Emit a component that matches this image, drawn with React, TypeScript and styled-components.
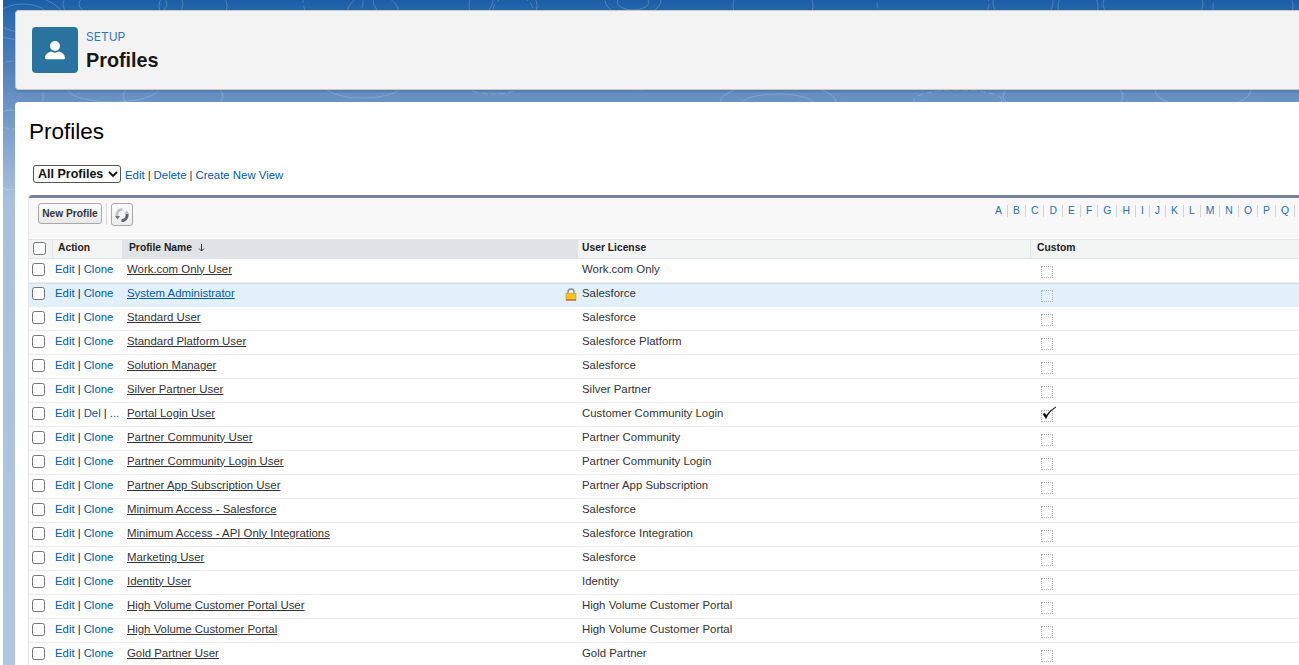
import React from "react";
import styled, { createGlobalStyle } from "styled-components";

const Global = createGlobalStyle`
  html, body { margin: 0; padding: 0; height: 665px; overflow: hidden; background: #fff; }
  body { font-family: "Liberation Sans", Arial, sans-serif; color: #181818; }
`;

const Backdrop = styled.div`
  position: relative;
  height: 665px;
  margin-left: 3px;
  padding: 10px 0 0 12px;
  box-sizing: border-box;
  overflow: hidden;
  background: linear-gradient(180deg, #1b5ea6 0px, #2a6aad 14px, #6490c2 95px, #a9c0de 200px, #b0c6e2 665px);
`;

const Contours = styled.svg`
  position: absolute;
  left: 0;
  top: 0;
  width: 1296px;
  height: 190px;
  pointer-events: none;
`;

const HeaderCard = styled.header`
  position: relative;
  display: flex;
  align-items: center;
  gap: 8px;
  height: 80px;
  box-sizing: border-box;
  padding: 0 0 0 16px;
  background: #f3f3f3;
  border: 1px solid #c9c9c9;
  border-right: 0;
  border-radius: 4px 0 0 4px;
  box-shadow: 0 2px 2px rgba(0, 0, 0, 0.12);
`;

const IconTile = styled.div`
  display: flex;
  align-items: center;
  justify-content: center;
  width: 46px;
  height: 46px;
  border-radius: 4px;
  background: #2a739e;
`;

const HeaderText = styled.div`
  display: flex;
  flex-direction: column;
  padding-top: 1px;
`;

const Eyebrow = styled.span`
  font-family: Inter, "Liberation Sans", sans-serif;
  font-size: 12px;
  line-height: 18px;
  color: #2e78b5;
`;

const HeaderTitle = styled.h1`
  margin: 1px 0 0;
  font-family: "Liberation Sans", sans-serif;
  font-size: 19.8px;
  line-height: 26px;
  font-weight: 700;
  color: #181818;
`;

const Panel = styled.main`
  position: relative;
  margin-top: 12px;
  height: 580px;
  padding: 16px 0 0 14px;
  box-sizing: border-box;
  background: #fff;
  border-radius: 4px 0 0 0;
  overflow: hidden;
`;

const PageTitle = styled.h2`
  margin: 0;
  font-size: 22.5px;
  line-height: 28px;
  font-weight: 400;
  color: #000;
`;

const ViewBar = styled.div`
  display: flex;
  align-items: center;
  height: 20px;
  margin: 19px 0 0 4px;
  font-size: 12px;
  color: #333;
`;

const ViewSelect = styled.div`
  display: flex;
  align-items: center;
  gap: 5px;
  box-sizing: border-box;
  width: 88px;
  height: 18px;
  padding-left: 4px;
  margin: -3px 4px 0 0;
  border: 1px solid #555;
  border-radius: 3px;
  font-size: 12.5px;
  font-weight: 700;
  color: #111;
  background: #fff;
`;

const Link = styled.a`
  color: #015ba7;
  font-size: 11.4px;
  text-decoration: none;
`;

const Sep = styled.span`
  margin: 0 3px;
  color: #333;
  font-size: 11.4px;
`;

const ListFrame = styled.section`
  margin-top: 10px;
  width: 1270px;
  border-top: 3px solid #7b829c;
  border-radius: 3px 0 0 0;
  box-shadow: -1px 0 0 #e3e3e3;
`;

const Toolbar = styled.div`
  display: flex;
  justify-content: space-between;
  height: 41px;
  box-sizing: border-box;
  padding: 5px 0 0 9px;
  background: #f8f8f8;
`;

const ToolGroup = styled.div`
  display: flex;
  align-items: flex-start;
`;

const ToolButton = styled.button`
  box-sizing: border-box;
  width: 64px;
  height: 21px;
  padding: 0;
  font-family: "Liberation Sans", sans-serif;
  font-size: 10.2px;
  font-weight: 700;
  color: #333;
  border: 1px solid #a9a9a9;
  border-radius: 3px;
  background: linear-gradient(#fbfbfb, #e8e8e8);
`;

const ToolDivider = styled.span`
  width: 1px;
  height: 22px;
  margin: 0 4px;
  background: #d8d8d8;
`;

const RefreshButton = styled.button`
  display: flex;
  align-items: center;
  justify-content: center;
  box-sizing: border-box;
  width: 22px;
  height: 23px;
  padding: 0;
  border: 1px solid #a9a9a9;
  border-radius: 3px;
  background: linear-gradient(#fbfbfb, #ececec);
`;

const Alpha = styled.nav`
  display: flex;
  height: 12px;
  margin: 2px 4px 0 0;
`;

const AlphaLetter = styled.a`
  display: block;
  padding: 0 5px;
  font-size: 10.4px;
  line-height: 12px;
  color: #2a6fb0;
  border-right: 1px solid #d4d4d4;
`;

const grid = `
  display: grid;
  grid-template-columns: 23px 70px 455px 453px 1fr;
`;

const HeadRow = styled.div`
  ${grid}
  height: 20px;
  box-sizing: border-box;
  background: #f2f3f3;
  border-top: 1px solid #e3e3e3;
  border-bottom: 1px solid #e0e3e5;
`;

const HeadCell = styled.div<{ $sorted?: boolean; $inset?: number }>`
  display: flex;
  align-items: center;
  gap: 6px;
  padding: 0 0 3px ${(p) => p.$inset ?? 6}px;
  font-size: 10.3px;
  font-weight: 700;
  color: #222;
  background: ${(p) => (p.$sorted ? "#e0e3e5" : "transparent")};
  border-left: 1px solid #e3e3e3;
`;

const CheckCell = styled.div<{ $head?: boolean }>`
  display: flex;
  align-items: center;
  padding: 0 0 ${(p) => (p.$head ? "2px" : "3px")} ${(p) => (p.$head ? "4px" : "3px")};
`;

const Box = styled.span`
  display: block;
  box-sizing: border-box;
  width: 13px;
  height: 13px;
  background: #fff;
  border: 1px solid #767676;
  border-radius: 2.5px;
`;

const Row = styled.div<{ $active?: boolean }>`
  ${grid}
  height: 24px;
  box-sizing: border-box;
  font-size: 11.42px;
  border-bottom: 1px solid #ececec;
  background: ${(p) => (p.$active ? "#e2f0fc" : "#fff")};
  box-shadow: ${(p) => (p.$active ? "inset 0 1px 0 #d9dfe3" : "none")};
`;

const Cell = styled.div`
  position: relative;
  display: flex;
  align-items: center;
  padding: 0 0 4px 5px;
  white-space: nowrap;
  color: #333;
`;

const ActionCell = styled(Cell)`
  padding-left: 3px;
`;

const RowLink = styled.a`
  color: #015ba7;
`;

const ActionSep = styled.span`
  margin: 0 3px;
  color: #222;
`;

const NameLink = styled.a<{ $active?: boolean }>`
  color: ${(p) => (p.$active ? "#015ba7" : "#333")};
  text-decoration: underline;
`;

const LockMark = styled.svg`
  position: absolute;
  right: 0;
  top: 5px;
`;

const CustomCell = styled.div`
  position: relative;
  padding: 7px 0 0 11px;
`;

const DottedBox = styled.span`
  display: block;
  box-sizing: border-box;
  width: 12px;
  height: 12px;
  border: 1px dotted #b5b5b5;
`;

const CheckMark = styled.svg`
  position: absolute;
  left: 12px;
  top: 3px;
`;

const letters = "ABCDEFGHIJKLMNOPQ".split("");

const contourRings: [number, number, number, number][] = [
  [20, 18, 40, 22], [20, 18, 26, 14], [8, 150, 26, 40], [10, 95, 30, 34],
  [120, 4, 60, 24], [120, 4, 44, 16], [190, 6, 34, 22], [330, 2, 30, 22], [370, 14, 26, 20],
  [430, 0, 60, 28], [500, 6, 34, 24], [510, 10, 20, 14], [630, 0, 28, 16], [630, 2, 16, 8],
  [770, 6, 40, 26], [930, 4, 56, 24], [1020, 2, 30, 22], [1075, 6, 20, 18], [1150, 4, 50, 22], [1250, 6, 40, 24],
  [110, 88, 46, 14], [170, 96, 50, 18], [360, 84, 40, 14], [490, 80, 34, 14], [635, 78, 26, 12],
  [775, 102, 58, 18], [775, 104, 36, 10], [955, 100, 44, 10], [1060, 96, 60, 20], [1200, 90, 48, 18],
];

const rows = [
  ["Work.com Only User", "Work.com Only"],
  ["System Administrator", "Salesforce"],
  ["Standard User", "Salesforce"],
  ["Standard Platform User", "Salesforce Platform"],
  ["Solution Manager", "Salesforce"],
  ["Silver Partner User", "Silver Partner"],
  ["Portal Login User", "Customer Community Login"],
  ["Partner Community User", "Partner Community"],
  ["Partner Community Login User", "Partner Community Login"],
  ["Partner App Subscription User", "Partner App Subscription"],
  ["Minimum Access - Salesforce", "Salesforce"],
  ["Minimum Access - API Only Integrations", "Salesforce Integration"],
  ["Marketing User", "Salesforce"],
  ["Identity User", "Identity"],
  ["High Volume Customer Portal User", "High Volume Customer Portal"],
  ["High Volume Customer Portal", "High Volume Customer Portal"],
  ["Gold Partner User", "Gold Partner"],
];

export default function App() {
  return (
    <>
      <Global />
      <Backdrop>
        <Contours viewBox="0 0 1296 190" fill="none" stroke="#ffffff" strokeOpacity="0.2">
          {contourRings.map(([cx, cy, rx, ry], i) => (
            <ellipse key={i} cx={cx} cy={cy} rx={rx} ry={ry} strokeDasharray={i % 4 === 3 ? "6 3" : undefined} />
          ))}
        </Contours>
        <HeaderCard>
          <IconTile>
            <svg width="22" height="22" viewBox="0 0 22 22" fill="#fff">
              <circle cx="11" cy="7" r="5" />
              <path d="M1 19c0-4 4-6 6-6.5 2.400 1.500 5.600 1.500 8 0 2 .5 6 2.500 6 6.500 0 .8-.6 1.200-1.200 1.200H2.200C1.600 20.200 1 19.800 1 19z" />
            </svg>
          </IconTile>
          <HeaderText>
            <Eyebrow>SETUP</Eyebrow>
            <HeaderTitle>Profiles</HeaderTitle>
          </HeaderText>
        </HeaderCard>
        <Panel>
          <PageTitle>Profiles</PageTitle>
          <ViewBar>
            <ViewSelect>
              All Profiles
              <svg width="10" height="6" viewBox="0 0 10 6" fill="none" stroke="#111" strokeWidth="1.8">
                <path d="M1 1l4 4 4-4" />
              </svg>
            </ViewSelect>
            <Link>Edit</Link>
            <Sep>|</Sep>
            <Link>Delete</Link>
            <Sep>|</Sep>
            <Link>Create New View</Link>
          </ViewBar>
          <ListFrame>
            <Toolbar>
              <ToolGroup>
                <ToolButton>New Profile</ToolButton>
                <ToolDivider />
                <RefreshButton>
                  <svg width="16" height="16" viewBox="0 0 15 15" fill="none">
                    <path d="M8 2.200A5.300 5.300 0 0 0 3.300 10" stroke="#c4c4c4" strokeWidth="2.600" />
                    <path d="M7 12.800A5.300 5.300 0 0 0 11.700 5" stroke="#5f6468" strokeWidth="2.600" />
                    <path d="M1 8.500h4.600l-2.300 3.200z" fill="#6f7478" />
                    <path d="M9.400 6.500H14l-2.300-3.200z" fill="#c4c4c4" />
                  </svg>
                </RefreshButton>
              </ToolGroup>
              <Alpha>
                {letters.map((l) => (
                  <AlphaLetter key={l}>{l}</AlphaLetter>
                ))}
              </Alpha>
            </Toolbar>
            <HeadRow>
              <CheckCell $head>
                <Box />
              </CheckCell>
              <HeadCell $inset={5}>Action</HeadCell>
              <HeadCell $sorted>
                Profile Name
                <svg width="7" height="8" viewBox="0 0 7 8" fill="none" stroke="#333">
                  <path d="M3.500 0v7M1 4.500l2.500 2.500L6 4.500" />
                </svg>
              </HeadCell>
              <HeadCell $inset={4}>User License</HeadCell>
              <HeadCell>Custom</HeadCell>
            </HeadRow>
            {rows.map(([name, license], i) => {
              const active = i === 1;
              const custom = i === 6;
              return (
                <Row key={name} $active={active}>
                  <CheckCell>
                    <Box />
                  </CheckCell>
                  <ActionCell>
                    <RowLink>Edit</RowLink>
                    <ActionSep>|</ActionSep>
                    {custom ? (
                      <>
                        <RowLink>Del</RowLink>
                        <ActionSep>|</ActionSep>
                        <RowLink>...</RowLink>
                      </>
                    ) : (
                      <RowLink>Clone</RowLink>
                    )}
                  </ActionCell>
                  <Cell>
                    <NameLink $active={active}>{name}</NameLink>
                    {active && (
                      <LockMark width="12" height="13" viewBox="0 0 12 13">
                        <path d="M3 6V4a3 3 0 0 1 6 0v2" fill="none" stroke="#8a8a8a" strokeWidth="1.400" />
                        <rect x="1" y="5.500" width="10" height="6.500" fill="#f5c518" stroke="#d39a10" strokeWidth="0.600" />
                        <rect x="1" y="11.500" width="10" height="1" fill="#c8371e" />
                      </LockMark>
                    )}
                  </Cell>
                  <Cell>{license}</Cell>
                  <CustomCell>
                    <DottedBox />
                    {custom && (
                      <CheckMark width="15" height="14" viewBox="0 0 15 14">
                        <path d="M1 8l3 4.500C6 8 9 4 14 1 9.500 3.500 6.500 6.500 4.200 9.500L2.800 7.200z" fill="#000" stroke="#000" strokeWidth="0.600" />
                      </CheckMark>
                    )}
                  </CustomCell>
                </Row>
              );
            })}
          </ListFrame>
        </Panel>
      </Backdrop>
    </>
  );
}
